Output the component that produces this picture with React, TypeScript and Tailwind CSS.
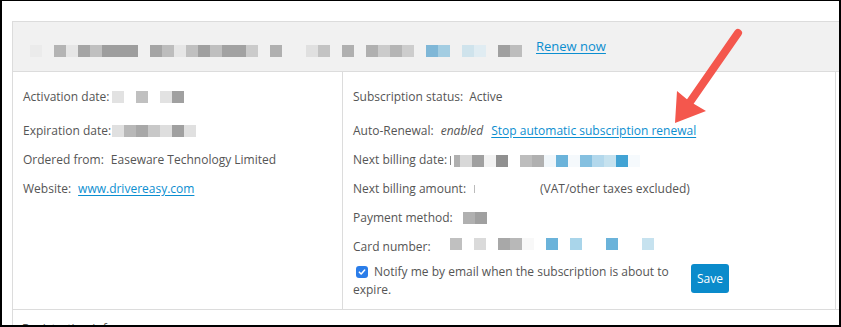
import React from "react";

type Cell = { c: string; w?: string };

const Px = ({ cells, className = "" }: { cells: Cell[]; className?: string }) => (
  <span className={`inline-flex shrink-0 ${className}`}>
    {cells.map((cell, i) => (
      <span key={i} className={`${cell.w ?? "w-[12px]"} h-[12px] ${cell.c}`} />
    ))}
  </span>
);

const g = (c: string): Cell => ({ c });
const _ = { c: "" };

const headerCells: Cell[] = [
  g("bg-[#ebebeb]"), _, g("bg-[#b4b4b4]"), g("bg-[#e6e6e6]"), g("bg-[#a5a5a5]"), g("bg-[#c0c0c0]"),
  g("bg-[#9e9e9e]"), g("bg-[#9e9e9e]"), g("bg-[#9e9e9e]"), _, g("bg-[#a5a5a5]"), g("bg-[#bdbdbd]"),
  g("bg-[#e6e6e6]"), g("bg-[#c0c0c0]"), g("bg-[#a0a0a0]"), g("bg-[#bfbfbf]"), g("bg-[#a2a2a2]"),
  g("bg-[#a2a2a2]"), g("bg-[#cbcbcb]"), _, g("bg-[#b0b0b0]"), _, _, g("bg-[#e0e0e0]"), g("bg-[#c3c3c3]"),
  _, g("bg-[#b0b0b0]"), _, g("bg-[#b0b0b0]"), g("bg-[#cbcbcb]"), g("bg-[#b5b5b5]"), g("bg-[#cdcdcd]"),
  _, g("bg-[#7fb7d7]"), g("bg-[#a3cde2]"), _, g("bg-[#cfe3ec]"), g("bg-[#e0ecf2]"), _,
  g("bg-[#a0a0a0]"), g("bg-[#bdbdbd]"),
];

const activationCells: Cell[] = [g("bg-[#e2e2e2]"), _, g("bg-[#c0c0c0]"), _, g("bg-[#e2e2e2]"), g("bg-[#a0a0a0]")];
const expirationCells: Cell[] = [
  g("bg-[#e0e0e0]"), g("bg-[#b8b8b8]"), g("bg-[#a8a8a8]"), g("bg-[#c8c8c8]"), g("bg-[#dedede]"),
  g("bg-[#a0a0a0]"), g("bg-[#e0e0e0]"),
];
const billingDateCells: Cell[] = [
  { c: "bg-[#b0b0b0]", w: "w-[6px]" }, g("bg-[#d8d8d8]"), g("bg-[#a0a0a0]"), g("bg-[#f2f2f2]"), g("bg-[#909090]"), _,
  g("bg-[#bdbdbd]"), g("bg-[#b0b0b0]"), g("bg-[#f0f6fa]"), g("bg-[#6bb3da]"), g("bg-[#f5f9fc]"),
  g("bg-[#85c0e0]"), g("bg-[#b3d8ec]"), g("bg-[#c6e2ef]"), g("bg-[#42a3d4]"), g("bg-[#f6fafd]"),
];
const paymentCells: Cell[] = [g("bg-[#b0b0b0]"), g("bg-[#a0a0a0]")];
const cardCells: Cell[] = [
  g("bg-[#c0c0c0]"), _, g("bg-[#dadada]"), _, g("bg-[#a8a8a8]"), g("bg-[#b8b8b8]"), g("bg-[#f8f8f8]"), _,
  g("bg-[#6bb3da]"), _, g("bg-[#a9d5ea]"), _, _, g("bg-[#6bb3da]"), _, _, g("bg-[#c6e2ef]"),
];

const Row = ({ children, className = "" }: { children: React.ReactNode; className?: string }) => (
  <div className={`flex items-center h-[20px] whitespace-nowrap ${className}`}>{children}</div>
);

const linkCls = "text-[#0b8ed0] underline underline-offset-[2px]";

export default function App() {
  return (
    <div
      className="relative w-[841px] h-[327px] overflow-hidden bg-white text-[12px] leading-[20px] text-[#555]"
      style={{ fontFamily: "'Open Sans', 'Noto Sans', sans-serif" }}
    >
      <div className="h-full border-t border-l-2 border-r-2 border-b-2 border-black overflow-hidden">
        <div className="ml-[10px] mt-[20px] w-[900px] border-l border-t border-[#dcdcdc]">
          {/* header */}
          <div className="flex items-start h-[50px] bg-[#f1f1f1] border-b border-[#dcdcdc] pl-[17px]">
            <Px cells={headerCells} className="mt-[23px]" />
            <a className={`${linkCls} ml-[14px] mt-[14px] text-[13px]`}>Renew now</a>
          </div>

          {/* body */}
          <div className="flex w-[823px] h-[237px]">
            <div className="w-[330px] border-r border-[#dcdcdc] pl-[10px] pt-[15px]">
              <Row className="mb-[14px]">
                <span>Activation date:</span>
                <Px cells={activationCells} className="ml-[3px]" />
              </Row>
              <Row className="mb-[9px]">
                <span>Expiration date:</span>
                <Px cells={expirationCells} className="ml-[1px]" />
              </Row>
              <Row className="mb-[9px]">
                <span>Ordered from:</span>
                <span className="ml-[7px]">Easeware Technology Limited</span>
              </Row>
              <Row>
                <span>Website:</span>
                <a className={`${linkCls} ml-[7px]`}>www.drivereasy.com</a>
              </Row>
            </div>
            <div className="flex-1 border-r border-[#dcdcdc] pl-[10px] pt-[15px]">
              <Row className="mb-[14px]">
                <span>Subscription status:</span>
                <span className="ml-[6px]">Active</span>
              </Row>
              <Row className="mb-[9px]">
                <span>Auto-Renewal:</span>
                <span className="ml-[7px] italic">enabled</span>
                <a className={`${linkCls} ml-[8px]`}>Stop automatic subscription renewal</a>
              </Row>
              <Row className="mb-[9px]">
                <span>Next billing date:</span>
                <span className="ml-[3px] w-[1px] h-[9px] bg-[#888]" />
                <Px cells={billingDateCells} className="ml-[3px] mt-[1px]" />
              </Row>
              <Row className="mb-[9px]">
                <span>Next billing amount:</span>
                <span className="ml-[8px] w-[1px] h-[8px] bg-[#bbb]" />
                <span className="ml-[65px]">(VAT/other taxes excluded)</span>
              </Row>
              <Row className="mb-[9px]">
                <span>Payment method:</span>
                <Px cells={paymentCells} className="ml-[10px]" />
              </Row>
              <Row className="mb-[6px]">
                <span>Card number:</span>
                <Px cells={cardCells} className="ml-[19px] -mt-[6px]" />
              </Row>
              <div className="flex items-start">
                <p className="w-[325px] leading-[18px]">
                  <span className="inline-flex items-center justify-center align-[-1px] w-[12px] h-[12px] ml-[3px] mr-[6px] rounded-[3px] bg-[#2b7de9]">
                    <svg viewBox="0 0 12 12" className="w-[10px] h-[10px]">
                      <path d="M2.8 6.2 L5 8.4 L9.2 3.6" fill="none" stroke="#fff" strokeWidth="1.8" strokeLinecap="round" strokeLinejoin="round" />
                    </svg>
                  </span>
                  Notify me by email when the subscription is about to expire.
                </p>
                <button className="ml-[13px] mt-[1px] w-[38px] h-[29px] rounded-[3px] bg-[#0b8bcb] text-white text-[12px] leading-[29px]">
                  Save
                </button>
              </div>
            </div>
          </div>

          {/* next section */}
          <div className="border-t border-[#dcdcdc] pl-[9px] pt-[9px]">
            <div>Registration info:</div>
          </div>
        </div>
      </div>

      <svg className="absolute left-0 top-0 pointer-events-none" width="841" height="327" viewBox="0 0 841 327">
        <line x1="738" y1="33" x2="690" y2="102" stroke="#f4574d" strokeWidth="8" strokeLinecap="round" />
        <polygon points="675,123 677,91 689,101 706,111" fill="#f4574d" />
      </svg>
    </div>
  );
}
